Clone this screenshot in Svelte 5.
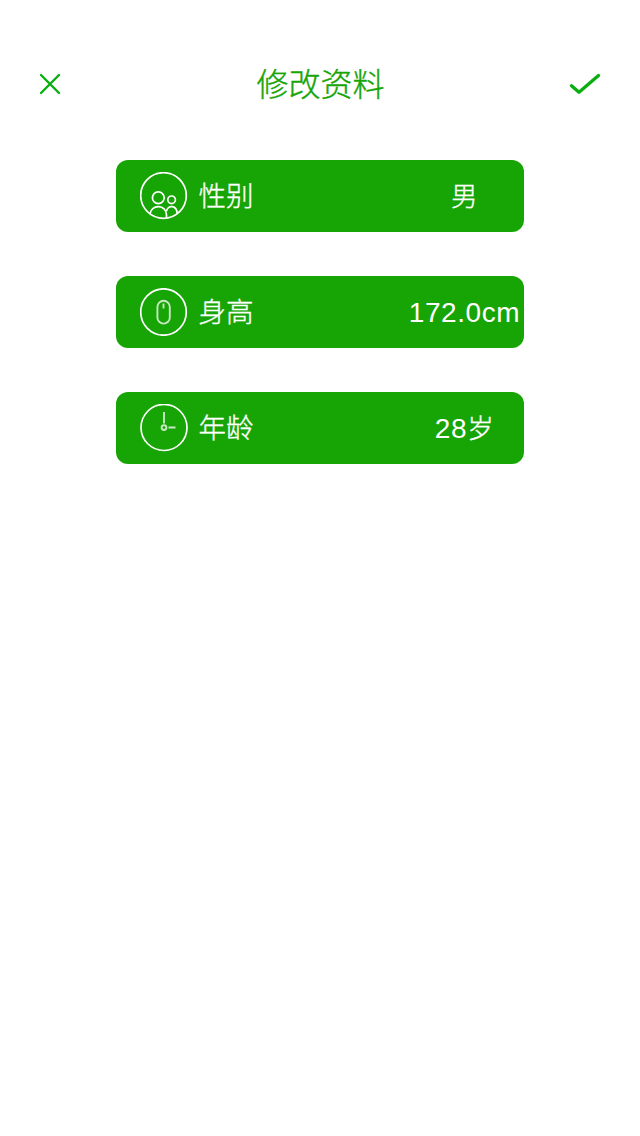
<script>
  const rows = [
    { icon: 'people', label: '性别', number: '', unit: '男' },
    { icon: 'mouse', label: '身高', number: '172.0cm', unit: '' },
    { icon: 'clock', label: '年龄', number: '28', unit: '岁' }
  ];
</script>

<main>
  <header>
    <button aria-label="关闭">
      <svg width="24" height="24" viewBox="0 0 24 24" stroke-width="2.4"><path d="M3 3 21 21M21 3 3 21" /></svg>
    </button>
    <h1>修改资料</h1>
    <button aria-label="确定">
      <svg width="34" height="24" viewBox="0 0 34 24" stroke-width="3.4"><path d="M3.5 13.8 11 20.2 30.5 3.5" /></svg>
    </button>
  </header>
  <section>
    {#each rows as row}
      <div class="row">
        <svg class="icon" width="48" height="48" viewBox="0 0 48 48">
          {#if row.icon === 'people'}
            <circle cx="23.5" cy="23.5" r="22.8" />
            <circle cx="18.3" cy="25.8" r="5.9" />
            <circle cx="31.6" cy="27.8" r="3.8" />
            <path d="M10 42C11 32 26.5 32 26.5 43V46M26.5 39C28 32.5 37 33 37.2 42" />
          {:else if row.icon === 'mouse'}
            <ellipse cx="23.5" cy="24" rx="22.8" ry="23.2" />
            <rect class="soft" x="17.4" y="12.8" width="12.4" height="22.8" rx="6.2" />
            <path class="soft" d="M23.5 15.5V20.5" />
          {:else}
            <circle cx="24" cy="23.5" r="23" />
            <circle class="soft" cx="24" cy="23.6" r="2.4" />
            <path class="soft" d="M24 8V19.5M28.5 23.5H35.5" />
          {/if}
        </svg>
        <span class="label">{row.label}</span>
        <span class="value">{row.number}{#if row.unit}<span class="unit">{row.unit}</span>{/if}</span>
      </div>
    {/each}
  </section>
</main>

<style>
  :global(body) { background: #fff; }
  main {
    min-height: 1136px;
    box-sizing: border-box;
    padding-top: 40px;
    font-family: "Liberation Sans", "Noto Sans CJK SC", sans-serif;
    font-weight: 300;
  }
  header {
    height: 88px;
    padding: 0 38px;
    display: grid;
    grid-template-columns: 40px 1fr 40px;
    align-items: center;
  }
  button {
    border: 0;
    padding: 0;
    background: none;
    display: flex;
  }
  button:last-child { justify-content: flex-end; }
  button svg {
    fill: none;
    stroke: #0bae12;
    stroke-linecap: round;
    stroke-linejoin: round;
  }
  h1 {
    margin: 0;
    padding: 0 0 4px 1px;
    text-align: center;
    font-family: "Noto Sans CJK SC", sans-serif;
    font-size: 32px;
    line-height: 48px;
    font-weight: 300;
    color: #17a405;
    -webkit-text-stroke: 0.4px #17a405;
  }
  section {
    padding: 32px 116px 0;
    display: flex;
    flex-direction: column;
    gap: 44px;
  }
  .row {
    height: 72px;
    box-sizing: border-box;
    padding: 2px 3px 0 24px;
    border-radius: 12px;
    background: #17a405;
    color: #fff;
    display: flex;
    align-items: center;
    font-size: 28px;
    line-height: 40px;
  }
  .icon {
    fill: none;
    stroke: #fff;
    stroke-width: 1.7;
    flex: none;
    margin-top: -2px;
  }
  .soft { stroke: #c5e9c0; stroke-width: 1.9; }
  .label {
    margin-left: 10.5px;
    padding-bottom: 1px;
    font-size: 27.5px;
    -webkit-text-stroke: 0.35px #fff;
  }
  .value {
    margin-left: auto;
    width: 113px;
    text-align: center;
    white-space: nowrap;
    letter-spacing: 0.6px;
  }
  .unit {
    font-size: 26.5px;
    -webkit-text-stroke: 0.35px #fff;
  }
</style>
